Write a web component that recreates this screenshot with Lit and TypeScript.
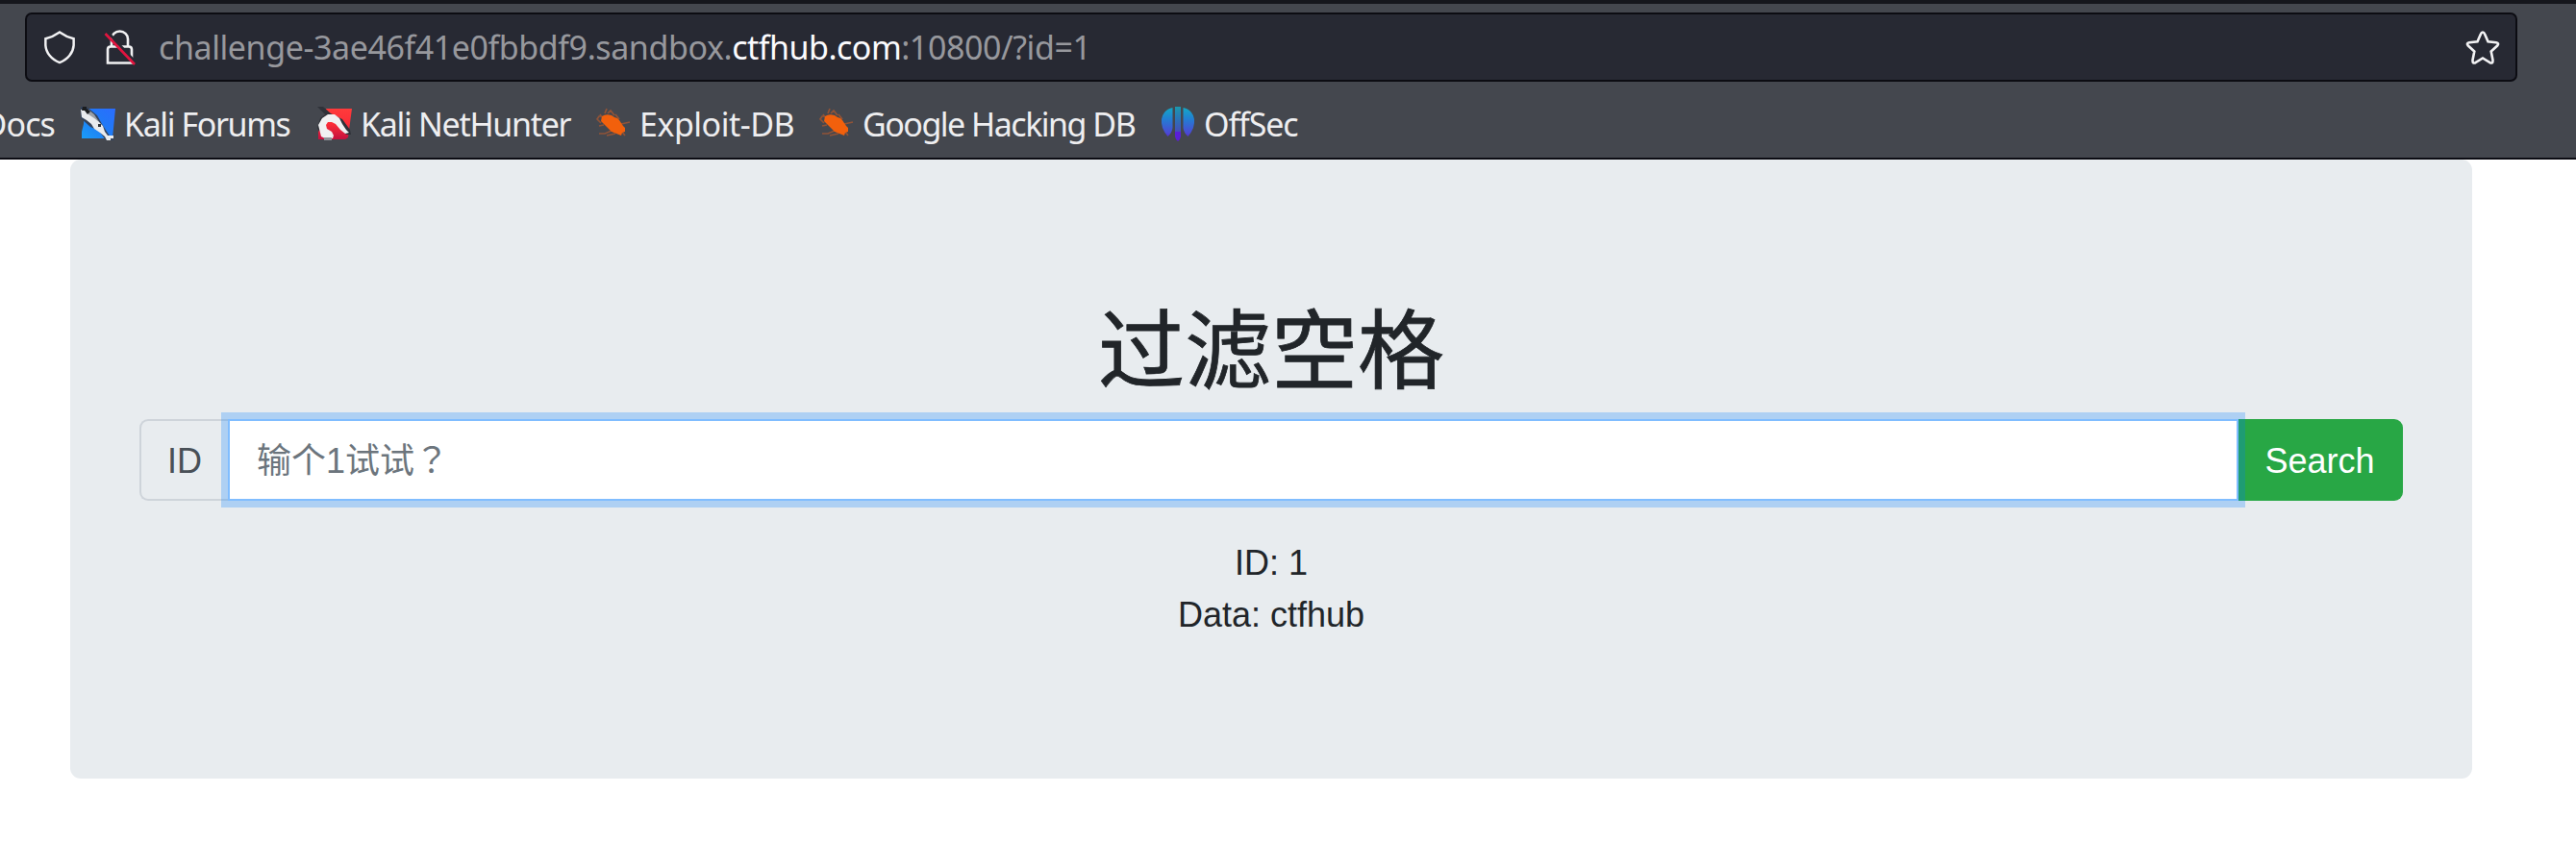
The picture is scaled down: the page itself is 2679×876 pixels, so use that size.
import { LitElement, html, css } from "lit";
import { customElement } from "lit/decorators.js";

const shield = html`<svg class="shield" viewBox="0 0 36 38"><path d="M18 2.5 C13 6 8 8.500 2.500 9.800 L2.500 17 C3 25 9 33 18 36 C27 33 33 25 33.500 17 L33.500 9.800 C28 8.500 23 6 18 2.5 Z"/></svg>`;
const lock = html`<svg class="lock" viewBox="0 0 34 38"><path d="M8 18 V10.5 a8.500 8 0 0 1 17 0 V18"/><path d="M7 18.500 H26 q3 0 3 3 V35.500 H4 V21.500 q0 -3 3 -3 Z"/><path class="gap" d="M4.500 4 L34 36"/><path class="slash" d="M1.500 5 L32 37"/></svg>`;
const star = html`<svg class="star" viewBox="0 0 36 36"><path d="M18 2 Q19.300 2 20 3.800 L23.500 11.800 L32 12.800 Q35.500 13.500 33.200 16 L26.700 22 L28.500 31 Q28.800 35 25.500 33.700 L18 29 L10.500 33.700 Q7.200 35 7.500 31 L9.300 22 L2.800 16 Q.500 13.500 4 12.800 L12.500 11.800 L16 3.800 Q16.700 2 18 2 Z"/></svg>`;

const forums = html`<svg class="fav" viewBox="0 0 36 36">
  <defs><linearGradient id="b" x1="1" y1="0" x2="0" y2="1"><stop offset="0" stop-color="#2b6cff"/><stop offset=".5" stop-color="#1f7bf5"/><stop offset="1" stop-color="#1a9df8"/></linearGradient></defs>
  <path fill="url(#b)" d="M4 2H36L33 33H1V26L3 18Z"/>
  <path fill="#34435c" d="M0 0H6L17 9L22 18L29 29L35 35H26L19 25L10 21L0 12Z"/>
  <path fill="#e9ebee" d="M0 3L5 3L9 7L15 11L20 17L23 20L25 26L28 30L34 30L34 33H31V35H27L25 31L20 27L14 23L11 18L6 14L1 11Z"/>
  <path fill="#9b9fa5" d="M8 3L14 8L19 16L14 12L8 8Z"/><path fill="#1b1d20" d="M2 0H6V2L10 5L7 8L4 4H1Z"/>
  <path fill="#30343a" d="M18 18h3v3h-3z"/></svg>`;
const nethunter = html`<svg class="fav" viewBox="0 0 36 36">
  <defs><linearGradient id="r" x1="0" y1="0" x2="0" y2="1"><stop offset="0" stop-color="#ff3b3b"/><stop offset=".5" stop-color="#fb2d38"/><stop offset="1" stop-color="#c4103f"/></linearGradient></defs>
  <path fill="url(#r)" d="M9 2H36L32 32L29 34H1V26L7 12Z"/>
  <path fill="#2f3239" d="M0 0H6L14 7L26 13L34 24L35 29H30L22 20L12 8L6 12L2 26L0 22L3 12L8 8Z"/>
  <path fill="#f1f1f2" d="M3 27L1 19L5 12L11 8L18 8L23 12L26 18L30 24L33 27L29 28L24 24L19 18L15 16H11L9 19L10 23L15 26L17 30L16 33H8L4 31Z"/>
  <path fill="#8e9197" d="M7 32h8v3h-8z"/></svg>`;
const bug = html`<svg class="fav" viewBox="0 0 36 36">
  <path fill="none" stroke="#a95730" stroke-opacity=".75" stroke-width="1.700" d="M9 7L11 2M12 7L15 4L19 9M6 10L3 10L1 13L5 17M20 8L24 13M26 18L35 16M26 25L30 30M16 25L9 28L3 28M20 28L11 30M6 11L4 8M8 19L3 20"/>
  <path fill="#f2600c" d="M6 10Q10 7 16 9L19 11L22 12L24 14L26 17L28 20L30 22L30 26L27 27L26 30L21 28L16 26L13 23L9 19L5 15Z"/></svg>`;
const offsec = html`<svg class="fav" viewBox="0 0 36 36">
  <defs><linearGradient id="o" gradientUnits="userSpaceOnUse" x1="0" y1="0" x2="0" y2="36"><stop offset="0" stop-color="#12acc4"/><stop offset=".35" stop-color="#227fd2"/><stop offset=".75" stop-color="#4a4bd3"/><stop offset="1" stop-color="#5f12d8"/></linearGradient></defs>
  <path fill="url(#o)" d="M12.500 1V22Q12 27 7.500 31Q4 27 2 22Q-1 12 4 6Q7 2 12.500 1ZM23.500 1V22Q24 27 28.500 31Q32 27 34 22Q37 12 32 6Q29 2 23.500 1Z"/>
  <path fill="url(#o)" opacity=".8" d="M15 0H21V26H15Z"/><path fill="#5a1fd6" d="M15 26H21V31L20 34L18 36L16 34L15 31Z"/></svg>`;

@customElement("app-root")
export class AppRoot extends LitElement {
  static styles = css`
    :host { display: block; height: 876px; overflow: hidden; background: #fff; font-family: "Liberation Sans", "Noto Sans CJK TC", sans-serif; }
    * { box-sizing: border-box; }
    .chrome { height: 166px; background: #44474e; border-top: 4px solid #15161c; border-bottom: 2px solid #0c0c13; font-family: "Noto Sans", sans-serif; font-size: 34px; padding-top: 9px; }
    .url { margin: 0 61px 0 26px; height: 72px; border: 2px solid #0c0c12; border-radius: 7px; background: #272933; display: flex; align-items: center; padding: 0 16px 0 17px; color: #97989d; }
    svg { display: block; flex: none; overflow: visible; }
    .shield, .lock, .star { fill: none; stroke: #f2f2f4; stroke-width: 2.600; }
    .shield { width: 34px; height: 38px; }
    .lock { width: 34px; height: 38px; margin-left: 29px; }
    .star { width: 36px; height: 37px; }
    .gap { stroke: #272933; stroke-width: 3; }
    .slash { stroke: #e2143f; stroke-width: 2.600; }
    .addr { flex: 1; margin-left: 23px; white-space: pre; line-height: 46px; letter-spacing: -.42px; }
    .addr b { font-weight: 400; color: #fbfbfe; letter-spacing: -.5px; }
    .marks { display: flex; align-items: center; height: 79px; padding-top: 9px; color: #eeeef0; line-height: 46px; white-space: pre; }
    .mark { display: flex; align-items: center; flex: none; }
    .mark span { margin-left: 9px; }
    .cut { width: 57px; justify-content: flex-end; overflow: hidden; margin-right: 27px; letter-spacing: -.9px; }
    .fav { width: 36px; height: 36px; }
    .m0 { width: 246px; letter-spacing: -1.400px; }
    .m1 { width: 290px; letter-spacing: -1.300px; }
    .m2 { width: 232px; letter-spacing: -.5px; }
    .m3 { width: 355px; letter-spacing: -1.500px; }
    .m4 { letter-spacing: -1.100px; }
    .jumbo { margin: 0 108px 0 73px; height: 644px; padding: 144px 72px; border-radius: 11px; background: #e8ecef; color: #212529; font-size: 36px; line-height: 54px; text-align: center; }
    h1 { margin: 0 0 16px; padding-top: 2px; font-size: 90px; line-height: 108px; font-weight: 400; -webkit-text-stroke: .8px #212529; }
    .group { display: flex; height: 85px; margin-bottom: 38px; }
    .addon { width: 94px; border: 2px solid #ced4da; border-right: 0; border-radius: 9px 0 0 9px; color: #495057; display: flex; align-items: center; padding: 2px 0 0 27px; }
    input { flex: 1; min-width: 0; margin: 0 0 0 -2px; border: 2px solid #80bdff; outline: 0; border-radius: 0; padding: 2px 27px 0 28px; background: #fff; font: inherit; color: #495057; box-shadow: 0 0 0 7px rgba(0, 123, 255, .25); position: relative; z-index: 1; }
    input::placeholder { color: #6c757d; opacity: 1; }
    button { width: 171px; border: 0; border-radius: 0 9px 9px 0; background: #28a745; color: #fff; font: inherit; padding: 2px 2px 0 0; }
    p { margin: 0; }
  `;

  render() {
    const marks = [
      [forums, "Kali Forums"],
      [nethunter, "Kali NetHunter"],
      [bug, "Exploit-DB"],
      [bug, "Google Hacking DB"],
      [offsec, "OffSec"],
    ];
    return html`
      <header class="chrome">
        <div class="url">${shield}${lock}<span class="addr">challenge-3ae46f41e0fbbdf9.sandbox.<b>ctfhub.com</b>:10800/?id=1</span>${star}</div>
        <nav class="marks">
          <div class="mark cut">Docs</div>
          ${marks.map(([icon, label], i) => html`<div class="mark m${i}">${icon}<span>${label}</span></div>`)}
        </nav>
      </header>
      <main class="jumbo">
        <h1>过滤空格</h1>
        <div class="group">
          <label class="addon" for="q">ID</label>
          <input id="q" type="text" placeholder="输个1试试？">
          <button type="button">Search</button>
        </div>
        <p>ID: 1</p>
        <p>Data: ctfhub</p>
      </main>`;
  }
}
